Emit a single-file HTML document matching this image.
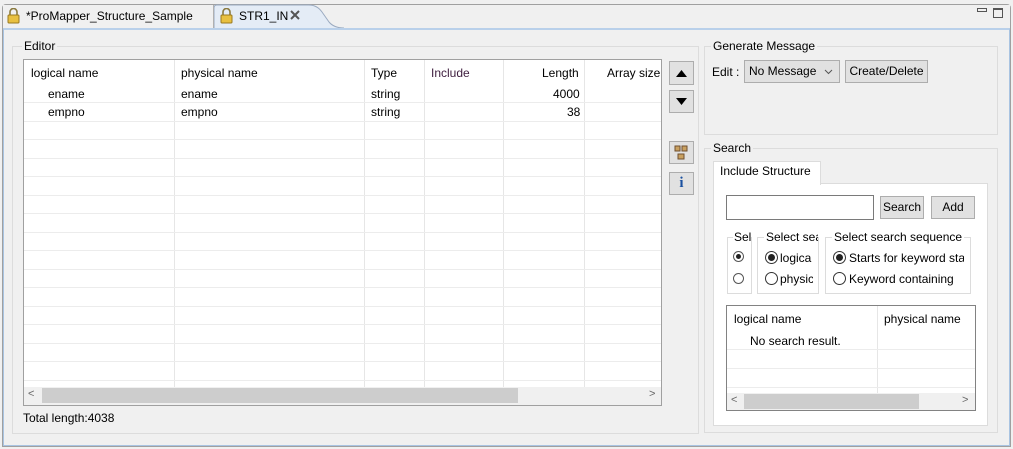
<!DOCTYPE html><html><head><style>
*{box-sizing:border-box}body{margin:0;width:1013px;height:449px;background:#f0f0f0;font-family:"Liberation Sans","Noto Sans CJK KR",sans-serif;font-size:12px;color:#000;position:relative;overflow:hidden}
.a{position:absolute}
.grp{position:absolute;border:1px solid #dcdcdc}
.lbl{position:absolute;background:#f0f0f0;padding:0 2px;font-size:12px}
.btn{position:absolute;background:#e1e1e1;border:1px solid #adadad;text-align:center;font-size:12px}
.cell{position:absolute;font-size:12px}
.vl{position:absolute;width:1px;background:#e6e6e6}
.hl{position:absolute;height:1px;background:#ececec}
</style></head><body>
<div class="a" style="left:2px;top:4px;width:1009px;height:443px;border:1px solid #a0a0a0;border-radius:4px 4px 0 0;background:#f0f0f0"></div>
<div class="a" style="left:3px;top:5px;width:1007px;height:23px;background:#f0f0f0"></div>
<div class="a" style="left:3px;top:5px;width:211px;height:23px;border-right:1px solid #b0b0b0;background:#f0f0f0"></div>
<div class="a" style="left:7px;top:8px;width:13px;height:16px"><svg width="13" height="16"><path d="M3 7V4a3.5 3.5 0 0 1 7 0v3" fill="none" stroke="#8a7a40" stroke-width="1.6"/><rect x="1" y="7" width="11" height="8" rx="1" fill="#e8c040" stroke="#9a7a20"/></svg></div>
<div class="cell" style="left:26px;top:9px">*ProMapper_Structure_Sample</div>
<svg class="a" style="left:214px;top:4px" width="130" height="25"><path d="M0 25V4Q0 1 3 1H95Q103 1 108 8L115 18Q120 24 130 24" fill="#e4ecf6" stroke="#9aaac0"/></svg>
<div class="a" style="left:220px;top:8px;width:13px;height:16px"><svg width="13" height="16"><path d="M3 7V4a3.5 3.5 0 0 1 7 0v3" fill="none" stroke="#8a7a40" stroke-width="1.6"/><rect x="1" y="7" width="11" height="8" rx="1" fill="#e8c040" stroke="#9a7a20"/></svg></div>
<div class="cell" style="left:239px;top:9px">STR1_IN</div>
<svg class="a" style="left:290px;top:10px" width="10" height="10"><path d="M1 1L9 9M9 1L1 9" stroke="#555" stroke-width="2"/></svg>
<div class="a" style="left:977px;top:8px;width:10px;height:4px;border:1px solid #555"></div>
<div class="a" style="left:993px;top:8px;width:10px;height:10px;border:1px solid #555;border-top-width:2px"></div>
<div class="a" style="left:3px;top:28px;width:1007px;height:418px;border:1px solid #a9c4e2;border-top:2px solid #b9d0ea;background:#f0f0f0"></div>

<div class="grp" style="left:12px;top:46px;width:687px;height:388px"></div>
<div class="lbl" style="left:22px;top:39px">Editor</div>
<div class="a" style="left:23px;top:59px;width:639px;height:347px;border:1px solid #a0a0a0;background:#fff"></div>
<div class="cell" style="left:31px;top:66px">logical name</div>
<div class="cell" style="left:181px;top:66px">physical name</div>
<div class="cell" style="left:371px;top:66px">Type</div>
<div class="cell" style="left:431px;top:66px;color:#402040">Include</div>
<div class="cell" style="left:542px;top:66px">Length</div>
<div class="a" style="left:607px;top:66px;width:54px;overflow:hidden;white-space:nowrap">Array size</div>
<div class="cell" style="left:48px;top:87px">ename</div><div class="cell" style="left:181px;top:87px">ename</div><div class="cell" style="left:371px;top:87px">string</div><div class="cell" style="left:553px;top:87px">4000</div>
<div class="cell" style="left:48px;top:105px">empno</div><div class="cell" style="left:181px;top:105px">empno</div><div class="cell" style="left:371px;top:105px">string</div><div class="cell" style="left:567px;top:105px">38</div>
<div class="vl" style="left:174px;top:60px;height:327px"></div>
<div class="vl" style="left:364px;top:60px;height:327px"></div>
<div class="vl" style="left:424px;top:60px;height:327px"></div>
<div class="vl" style="left:503px;top:60px;height:327px"></div>
<div class="vl" style="left:584px;top:60px;height:327px"></div>
<div id="rows"></div>
<div class="a" style="left:24px;top:387px;width:637px;height:18px;background:#f0f0f0"></div>
<div class="a" style="left:42px;top:388px;width:476px;height:15px;background:#cdcdcd"></div>
<div class="cell" style="left:28px;top:388px;color:#666;font-size:11px">&lt;</div>
<div class="cell" style="left:649px;top:388px;color:#666;font-size:11px">&gt;</div>
<div class="cell" style="left:23px;top:411px">Total length:4038</div>

<div class="btn" style="left:669px;top:61px;width:25px;height:24px"><svg width="23" height="22"><path d="M6 15L11.5 8L17 15Z" fill="#000"/></svg></div>
<div class="btn" style="left:669px;top:90px;width:25px;height:23px"><svg width="23" height="21"><path d="M6 7L11.5 14L17 7Z" fill="#000"/></svg></div>
<div class="btn" style="left:669px;top:141px;width:25px;height:23px"><svg width="23" height="21"><rect x="5" y="4" width="5" height="5" fill="#c8a060" stroke="#705030"/><rect x="12" y="4" width="5" height="5" fill="#c8a060" stroke="#705030"/><rect x="8" y="12" width="6" height="5" fill="#c8a060" stroke="#705030"/></svg></div>
<div class="btn" style="left:669px;top:172px;width:25px;height:23px;line-height:21px;color:#1a50a0;font-weight:bold;font-family:'Liberation Serif',serif;font-size:15px">i</div>

<div class="grp" style="left:704px;top:46px;width:294px;height:89px"></div>
<div class="lbl" style="left:711px;top:39px">Generate Message</div>
<div class="cell" style="left:712px;top:65px">Edit :</div>
<div class="btn" style="left:744px;top:60px;width:96px;height:23px;text-align:left;padding-left:4px;line-height:21px">No Message <svg style="position:absolute;right:6px;top:8px" width="9" height="6"><path d="M1 1L4.5 4.5L8 1" fill="none" stroke="#555"/></svg></div>
<div class="btn" style="left:845px;top:60px;width:83px;height:23px;line-height:21px">Create/Delete</div>

<div class="grp" style="left:704px;top:148px;width:294px;height:285px"></div>
<div class="lbl" style="left:711px;top:141px">Search</div>
<div class="a" style="left:713px;top:183px;width:275px;height:243px;background:#fff;border:1px solid #dcdcdc"></div>
<div class="a" style="left:713px;top:161px;width:108px;height:24px;background:#fff;border:1px solid #dcdcdc;border-bottom:none;padding:2px 0 0 6px">Include Structure</div>
<div class="a" style="left:726px;top:195px;width:148px;height:25px;border:1px solid #7a7a7a;background:#fff"></div>
<div class="btn" style="left:880px;top:196px;width:44px;height:23px;line-height:21px">Search</div>
<div class="btn" style="left:931px;top:196px;width:44px;height:23px;line-height:21px">Add</div>
<div class="grp" style="left:727px;top:237px;width:25px;height:57px"></div>
<div class="a" style="left:733px;top:230px;background:#fff;padding:0 1px;width:18px;overflow:hidden;white-space:nowrap">Sel</div>
<div class="grp" style="left:757px;top:237px;width:62px;height:57px"></div>
<div class="a" style="left:764px;top:230px;background:#fff;padding:0 2px;width:54px;overflow:hidden;white-space:nowrap">Select sea</div>
<div class="grp" style="left:825px;top:237px;width:146px;height:57px"></div>
<div class="a" style="left:832px;top:230px;background:#fff;padding:0 2px">Select search sequence</div>
<div class="a" style="left:733px;top:251px;width:11px;height:11px;border:1px solid #555;border-radius:50%"><div class="a" style="left:2px;top:2px;width:5px;height:5px;border-radius:50%;background:#222"></div></div>
<div class="a" style="left:733px;top:273px;width:11px;height:11px;border:1px solid #555;border-radius:50%"></div>
<div class="a" style="left:765px;top:251px;width:13px;height:13px;border:1px solid #333;border-radius:50%"><div class="a" style="left:2px;top:2px;width:7px;height:7px;border-radius:50%;background:#222"></div></div>
<div class="a" style="left:765px;top:272px;width:13px;height:13px;border:1px solid #333;border-radius:50%"></div>
<div class="a" style="left:780px;top:251px;width:33px;overflow:hidden;white-space:nowrap">logica</div>
<div class="a" style="left:780px;top:272px;width:33px;overflow:hidden;white-space:nowrap">physic</div>
<div class="a" style="left:833px;top:251px;width:13px;height:13px;border:1px solid #333;border-radius:50%"><div class="a" style="left:2px;top:2px;width:7px;height:7px;border-radius:50%;background:#222"></div></div>
<div class="a" style="left:833px;top:272px;width:13px;height:13px;border:1px solid #333;border-radius:50%"></div>
<div class="a" style="left:849px;top:251px;width:115px;overflow:hidden;white-space:nowrap">Starts for keyword start</div>
<div class="a" style="left:849px;top:272px;white-space:nowrap">Keyword containing</div>

<div class="a" style="left:726px;top:305px;width:250px;height:106px;border:1px solid #828282;background:#fff"></div>
<div class="cell" style="left:734px;top:312px">logical name</div>
<div class="cell" style="left:884px;top:312px">physical name</div>
<div class="cell" style="left:750px;top:334px">No search result.</div>
<div class="vl" style="left:877px;top:306px;height:88px"></div>
<div class="hl" style="left:727px;top:349px;width:248px"></div>
<div class="hl" style="left:727px;top:368px;width:248px"></div>
<div class="hl" style="left:727px;top:387px;width:248px"></div>
<div class="a" style="left:727px;top:393px;width:248px;height:17px;background:#f0f0f0"></div>
<div class="a" style="left:744px;top:394px;width:175px;height:15px;background:#cdcdcd"></div>
<div class="cell" style="left:731px;top:394px;color:#666;font-size:11px">&lt;</div>
<div class="cell" style="left:962px;top:394px;color:#666;font-size:11px">&gt;</div>
<script>
var r=document.getElementById('rows'),h='';
for(var y=102;y<387;y+=18.5){h+='<div class="hl" style="left:24px;top:'+Math.round(y)+'px;width:637px"></div>';}
r.innerHTML=h;
</script>
</body></html>
